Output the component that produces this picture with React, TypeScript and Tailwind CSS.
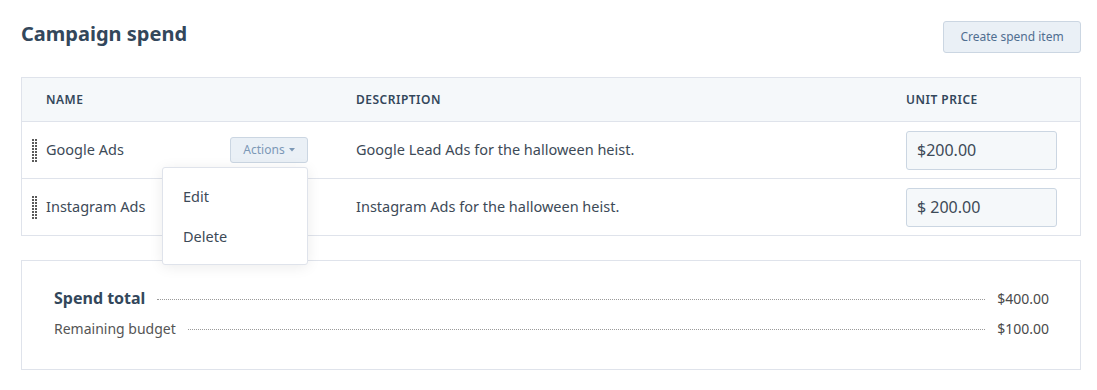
import React from 'react';

const rows = [
  { name: 'Google Ads', description: 'Google Lead Ads for the halloween heist.', price: '$200.00', menu: true },
  { name: 'Instagram Ads', description: 'Instagram Ads for the halloween heist.', price: '$ 200.00', menu: false },
];

const DragHandle = () => (
  <div className="grid grid-cols-2 gap-x-[1px] gap-y-[1px] w-[5px]">
    {Array.from({ length: 16 }).map((_, i) => (
      <span key={i} className="block w-[2px] h-[2px] bg-[#5a5a5a]" />
    ))}
  </div>
);

export default function App() {
  return (
    <div className="w-[1097px] h-[390px] bg-white pl-[21px] pr-[16px] pt-[21px] font-['Noto_Sans',sans-serif] text-[#33475b]">
      {/* Header */}
      <div className="flex justify-between items-start">
        <h1 className="text-[20px] font-bold leading-[26px] text-[#33475b]">Campaign spend</h1>
        <button className="h-[32px] w-[138px] rounded-[3px] border border-[#cbd6e2] bg-[#eaf0f6] text-[12px] text-[#506e91]">
          Create spend item
        </button>
      </div>

      {/* Table */}
      <div className="mt-[24px] border border-[#dfe3eb]">
        <div className="flex h-[44px] items-center bg-[#f5f8fa] border-b border-[#dfe3eb] text-[12px] font-semibold tracking-[0.5px]">
          <div className="w-[310px] pl-[24px]">NAME</div>
          <div className="w-[550px] pl-[24px]">DESCRIPTION</div>
          <div className="flex-1 pl-[24px]">UNIT PRICE</div>
        </div>
        {rows.map((row, idx) => (
          <div
            key={row.name}
            className={`flex items-center text-[14.5px] text-[#3d4a57] ${idx === 0 ? 'h-[57px] border-b border-[#dfe3eb]' : 'h-[56px]'}`}
          >
            <div className="w-[310px] flex items-center pl-[10px] relative">
              <DragHandle />
              <span className="ml-[9px] flex-1">{row.name}</span>
              {row.menu && (
                <div className="relative mr-[24px]">
                  <button className="h-[26px] w-[78px] rounded-[3px] border border-[#cbd6e2] bg-[#eaf0f6] text-[12px] text-[#7c98b6] flex items-center justify-center gap-[4px]">
                    Actions
                    <svg width="6" height="4" viewBox="0 0 6 4">
                      <path d="M0 0h6L3 3.5z" fill="#7c98b6" />
                    </svg>
                  </button>
                  <div className="absolute right-0 top-[30px] z-10 w-[146px] h-[98px] rounded-[3px] border border-[#dfe3eb] bg-white shadow-[0_2px_14px_rgba(0,0,0,0.08)] text-[14.5px] text-[#3d4a57] flex flex-col pt-[18px] pl-[20px] gap-[18px]">
                    <span>Edit</span>
                    <span>Delete</span>
                  </div>
                </div>
              )}
            </div>
            <div className="w-[550px] pl-[24px]">{row.description}</div>
            <div className="flex-1 pl-[24px]">
              <div className="w-[151px] h-[39px] rounded-[3px] border border-[#cbd6e2] bg-[#f5f8fa] flex items-center pl-[10px] text-[16px]">
                {row.price}
              </div>
            </div>
          </div>
        ))}
      </div>

      {/* Summary */}
      <div className="mt-[24px] h-[110px] border border-[#dfe3eb] pl-[32px] pr-[31px] pt-[25px]">
        <div className="flex items-center h-[24px]">
          <span className="text-[16px] font-bold text-[#33475b]">Spend total</span>
          <span className="flex-1 mx-[12px] border-b border-dotted border-[#9a9a9a] translate-y-[1px]" />
          <span className="text-[14px] text-[#4a4a4a]">$400.00</span>
        </div>
        <div className="flex items-center h-[24px] mt-[6px]">
          <span className="text-[14px] text-[#555]">Remaining budget</span>
          <span className="flex-1 mx-[12px] border-b border-dotted border-[#9a9a9a] translate-y-[1px]" />
          <span className="text-[14px] text-[#4a4a4a]">$100.00</span>
        </div>
      </div>
    </div>
  );
}
